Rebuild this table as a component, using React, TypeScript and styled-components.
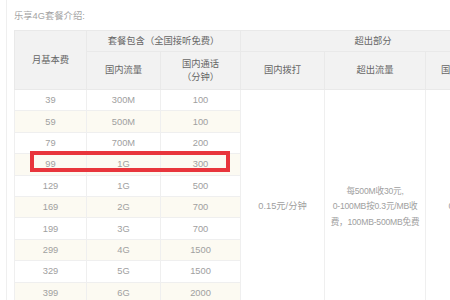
import styled, { createGlobalStyle } from "styled-components";

interface Plan {
    fee: number;
    data: string;
    minutes: number;
}

const plans: Plan[] = [
    { fee: 39, data: "300M", minutes: 100 },
    { fee: 59, data: "500M", minutes: 100 },
    { fee: 79, data: "700M", minutes: 200 },
    { fee: 99, data: "1G", minutes: 300 },
    { fee: 129, data: "1G", minutes: 500 },
    { fee: 169, data: "2G", minutes: 700 },
    { fee: 199, data: "3G", minutes: 700 },
    { fee: 299, data: "4G", minutes: 1500 },
    { fee: 329, data: "5G", minutes: 1500 },
    { fee: 399, data: "6G", minutes: 2000 },
    { fee: 599, data: "11G", minutes: 3000 },
];

const GlobalStyle = createGlobalStyle`
    body {
        margin: 0;
        background: #fff;
        overflow: hidden;
        font-family: "Liberation Sans", "Noto Sans CJK SC", sans-serif;
    }
`;

const Page = styled.div`
    margin-left: 6px;
    border-left: 1px solid #efefef;
    padding: 10px 0 0 7px;
    height: 300px;
    box-sizing: border-box;
`;

const Title = styled.p`
    margin: 0 0 8px;
    font-size: 9.3px;
    line-height: 12px;
    color: #a3a3a3;
`;

const TableWrap = styled.div`
    position: relative;
    width: 491px;
`;

const Table = styled.table`
    border-collapse: collapse;
    table-layout: fixed;
    width: 491px;
    font-size: 9.3px;
    text-align: center;
`;

const Th = styled.th<{ $h?: number }>`
    background: #f2f2f2;
    color: #666;
    font-weight: normal;
    border: 1px solid #e9e9e9;
    padding: 0 4px;
    height: ${(p) => p.$h ?? 20}px;
    line-height: 13px;
`;

const Row = styled.tr<{ $cream: boolean }>`
    background: ${(p) => (p.$cream ? "#fcfaf2" : "#fff")};
`;

const Td = styled.td`
    color: #a0a0a0;
    border: 1px solid #efefef;
    height: 20.4px;
    padding: 0;
`;

const SpanCell = styled.td<{ $small?: boolean }>`
    background: #fff;
    color: #a0a0a0;
    border: 1px solid #efefef;
    padding: 0;
    white-space: nowrap;
    font-size: ${(p) => (p.$small ? "8.6px" : "inherit")};
    letter-spacing: ${(p) => (p.$small ? "-0.2px" : "normal")};
    line-height: 15.5px;
`;

const Highlight = styled.div`
    position: absolute;
    left: 16px;
    top: 121px;
    width: 200px;
    height: 21px;
    box-sizing: border-box;
    border: 4px solid #e8353c;
    pointer-events: none;
`;

export default function App() {
    return (
        <>
            <GlobalStyle />
            <Page>
                <Title>乐享4G套餐介绍:</Title>
                <TableWrap>
                    <Table>
                        <colgroup>
                            <col style={{ width: 72 }} />
                            <col style={{ width: 74 }} />
                            <col style={{ width: 80 }} />
                            <col style={{ width: 84 }} />
                            <col style={{ width: 101 }} />
                            <col style={{ width: 80 }} />
                        </colgroup>
                        <thead>
                            <tr>
                                <Th rowSpan={2}>月基本费</Th>
                                <Th colSpan={2}>套餐包含（全国接听免费）</Th>
                                <Th colSpan={3}>超出部分</Th>
                            </tr>
                            <tr>
                                <Th $h={37}>国内流量</Th>
                                <Th $h={37}>
                                    国内通话
                                    <br />
                                    （分钟）
                                </Th>
                                <Th $h={37}>国内拨打</Th>
                                <Th $h={37}>超出流量</Th>
                                <Th $h={37}>国内短/彩信</Th>
                            </tr>
                        </thead>
                        <tbody>
                            {plans.map((p, i) => (
                                <Row key={p.fee} $cream={i % 2 === 1}>
                                    <Td>{p.fee}</Td>
                                    <Td>{p.data}</Td>
                                    <Td>{p.minutes}</Td>
                                    {i === 0 && (
                                        <>
                                            <SpanCell rowSpan={plans.length}>0.15元/分钟</SpanCell>
                                            <SpanCell $small rowSpan={plans.length}>
                                                每500M收30元,
                                                <br />
                                                0-100MB按0.3元/MB收
                                                <br />
                                                费，100MB-500MB免费
                                            </SpanCell>
                                            <SpanCell rowSpan={plans.length}>0.1元/条</SpanCell>
                                        </>
                                    )}
                                </Row>
                            ))}
                        </tbody>
                    </Table>
                    <Highlight />
                </TableWrap>
            </Page>
        </>
    );
}
